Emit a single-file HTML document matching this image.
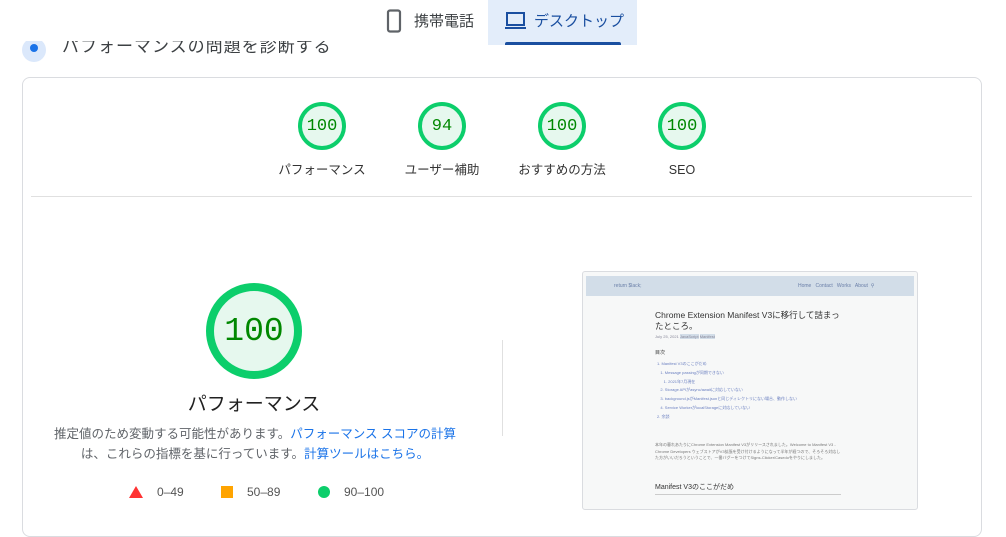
<!DOCTYPE html>
<html><head><meta charset="utf-8"><style>
*{margin:0;padding:0;box-sizing:border-box}
body{width:1006px;height:526px;overflow:hidden;background:#fff;font-family:"Liberation Sans","Noto Sans CJK JP",sans-serif;color:#202124;position:relative}
.abs{position:absolute}
.g{position:absolute;width:48px;height:48px;border-radius:50%;border:4px solid #0cce6b;background:#e6f8ee;display:flex;align-items:center;justify-content:center;font-family:"Liberation Mono",monospace;font-size:17px;color:#008800}
.lbl{position:absolute;width:120px;text-align:center;font-size:12.5px;line-height:16px;height:16px;color:#333;top:162px}
a{color:#1a73e8;text-decoration:none}
</style></head><body>
<div class="abs" style="left:62px;top:35px;font-size:17px;line-height:24px;color:#3c4043;letter-spacing:1px">パフォーマンスの問題を診断する</div>
<div class="abs" style="left:22px;top:38px;width:24px;height:24px;border-radius:50%;background:#dbe8fb"></div>
<div class="abs" style="left:30px;top:44px;width:8px;height:8px;border-radius:50%;background:#1a73e8"></div>
<div class="abs" style="left:0;top:0;width:1006px;height:41px;background:#fff"></div>
<svg class="abs" style="left:386px;top:9px" width="16" height="24" viewBox="0 0 16 24"><rect x="2" y="1.5" width="12" height="21" rx="2" fill="none" stroke="#5f6368" stroke-width="2.2"/></svg>
<div class="abs" style="left:414px;top:10px;font-size:15px;color:#3c4043">携帯電話</div>
<div class="abs" style="left:488px;top:0;width:149px;height:45px;background:#e3edfa"></div>
<div class="abs" style="left:505px;top:42px;width:116px;height:3px;background:#1a4fa0;border-radius:2px 2px 0 0"></div>
<svg class="abs" style="left:505px;top:11px" width="22" height="20" viewBox="0 0 22 20"><rect x="2" y="2" width="17" height="12" fill="none" stroke="#1a4fa0" stroke-width="2"/><rect x="0" y="16" width="21" height="2" fill="#1a4fa0"/></svg>
<div class="abs" style="left:534px;top:10px;font-size:15px;color:#1a4fa0">デスクトップ</div>
<div class="abs" style="left:22px;top:77px;width:960px;height:460px;border:1px solid #dadce0;border-radius:8px"></div>
<div class="g" style="left:298px;top:102px">100</div>
<div class="g" style="left:418px;top:102px;border-top-color:#0cce6b">94</div>
<div class="g" style="left:538px;top:102px">100</div>
<div class="g" style="left:658px;top:102px">100</div>
<div class="lbl" style="left:262px">パフォーマンス</div>
<div class="lbl" style="left:382px">ユーザー補助</div>
<div class="lbl" style="left:502px">おすすめの方法</div>
<div class="lbl" style="left:622px">SEO</div>
<div class="abs" style="left:31px;top:196px;width:941px;height:1px;background:#e0e0e0"></div>
<div class="abs" style="left:206px;top:283px;width:96px;height:96px;border-radius:50%;border:8px solid #0cce6b;background:#e6f8ee;display:flex;align-items:center;justify-content:center;font-family:'Liberation Mono',monospace;font-size:33px;color:#008800">100</div>
<div class="abs" style="left:104px;top:393px;width:300px;text-align:center;font-size:19px;line-height:24px;color:#212121">パフォーマンス</div>
<div class="abs" style="left:40px;top:424px;width:430px;text-align:center;font-size:12.5px;line-height:20px;color:#5f6368">推定値のため変動する可能性があります。<a>パフォーマンス スコアの計算</a><br>は、これらの指標を基に行っています。<a>計算ツールはこちら。</a></div>
<svg class="abs" style="left:129px;top:486px" width="14" height="12"><polygon points="7,0 14,12 0,12" fill="#ff3333"/></svg>
<div class="abs" style="left:157px;top:485px;font-size:12px;color:#555">0–49</div>
<div class="abs" style="left:221px;top:486px;width:12px;height:12px;background:#ffa400"></div>
<div class="abs" style="left:247px;top:485px;font-size:12px;color:#555">50–89</div>
<div class="abs" style="left:318px;top:486px;width:12px;height:12px;border-radius:50%;background:#0cce6b"></div>
<div class="abs" style="left:344px;top:485px;font-size:12px;color:#555">90–100</div>
<div class="abs" style="left:502px;top:340px;width:1px;height:96px;background:#e0e0e0"></div>
<div class="abs" style="left:582px;top:271px;width:336px;height:239px;border:1px solid #dadce0;border-radius:3px;background:#f7f8f8;overflow:hidden">
<div style="margin:4px 3px 0;height:20px;background:#d2dde8;position:relative;font-size:5px;color:#6a7fa8">
<span style="position:absolute;left:28px;top:7px">return $lack;</span>
<span style="position:absolute;left:212px;top:7px">Home &nbsp; Contact &nbsp; Works &nbsp; About &nbsp;⚲</span></div>
<div style="position:absolute;left:72px;top:38px;width:190px;font-size:8.5px;color:#333;line-height:11px">Chrome Extension Manifest V3に移行して詰まったところ。</div>
<div style="position:absolute;left:72px;top:62px;font-size:4px;color:#889">July 25, 2021 <span style="background:#d2dde8">JavaScript</span> <span style="background:#d2dde8">Manifest</span></div>
<div style="position:absolute;left:72px;top:77px;font-size:5px;color:#333">目次</div>
<div style="position:absolute;left:74px;top:88px;width:180px;font-size:4px;line-height:8.8px;color:#6a7fc0">1. Manifest V3のここがだめ<br>&nbsp;&nbsp;&nbsp;1. Message passingが同期できない<br>&nbsp;&nbsp;&nbsp;&nbsp;&nbsp;&nbsp;1. 2021年7月現在<br>&nbsp;&nbsp;&nbsp;2. Storage APIがasync/awaitに対応していない<br>&nbsp;&nbsp;&nbsp;3. background.jsがManifest.jsonと同じディレクトリにない場合、動作しない<br>&nbsp;&nbsp;&nbsp;4. Service WorkerがlocalStorageに対応していない<br>2. 余談</div>
<div style="position:absolute;left:72px;top:170px;width:186px;font-size:4px;line-height:6.5px;color:#777">本年の暮れあたりにChrome Extension Manifest V3がリリースされました。Welcome to Manifest V3 - Chrome Developers ウェブストアがV3拡張を受け付けるようになって半年が経つので、そろそろ対応した方がいいだろうということで、一番バグーをつけてSigns-Clicker/Casedoをやりにしました。</div>
<div style="position:absolute;left:72px;top:210px;width:186px;font-size:7px;color:#333;border-bottom:1px solid #ccc;padding-bottom:2px">Manifest V3のここがだめ</div>
</div>
</body></html>
